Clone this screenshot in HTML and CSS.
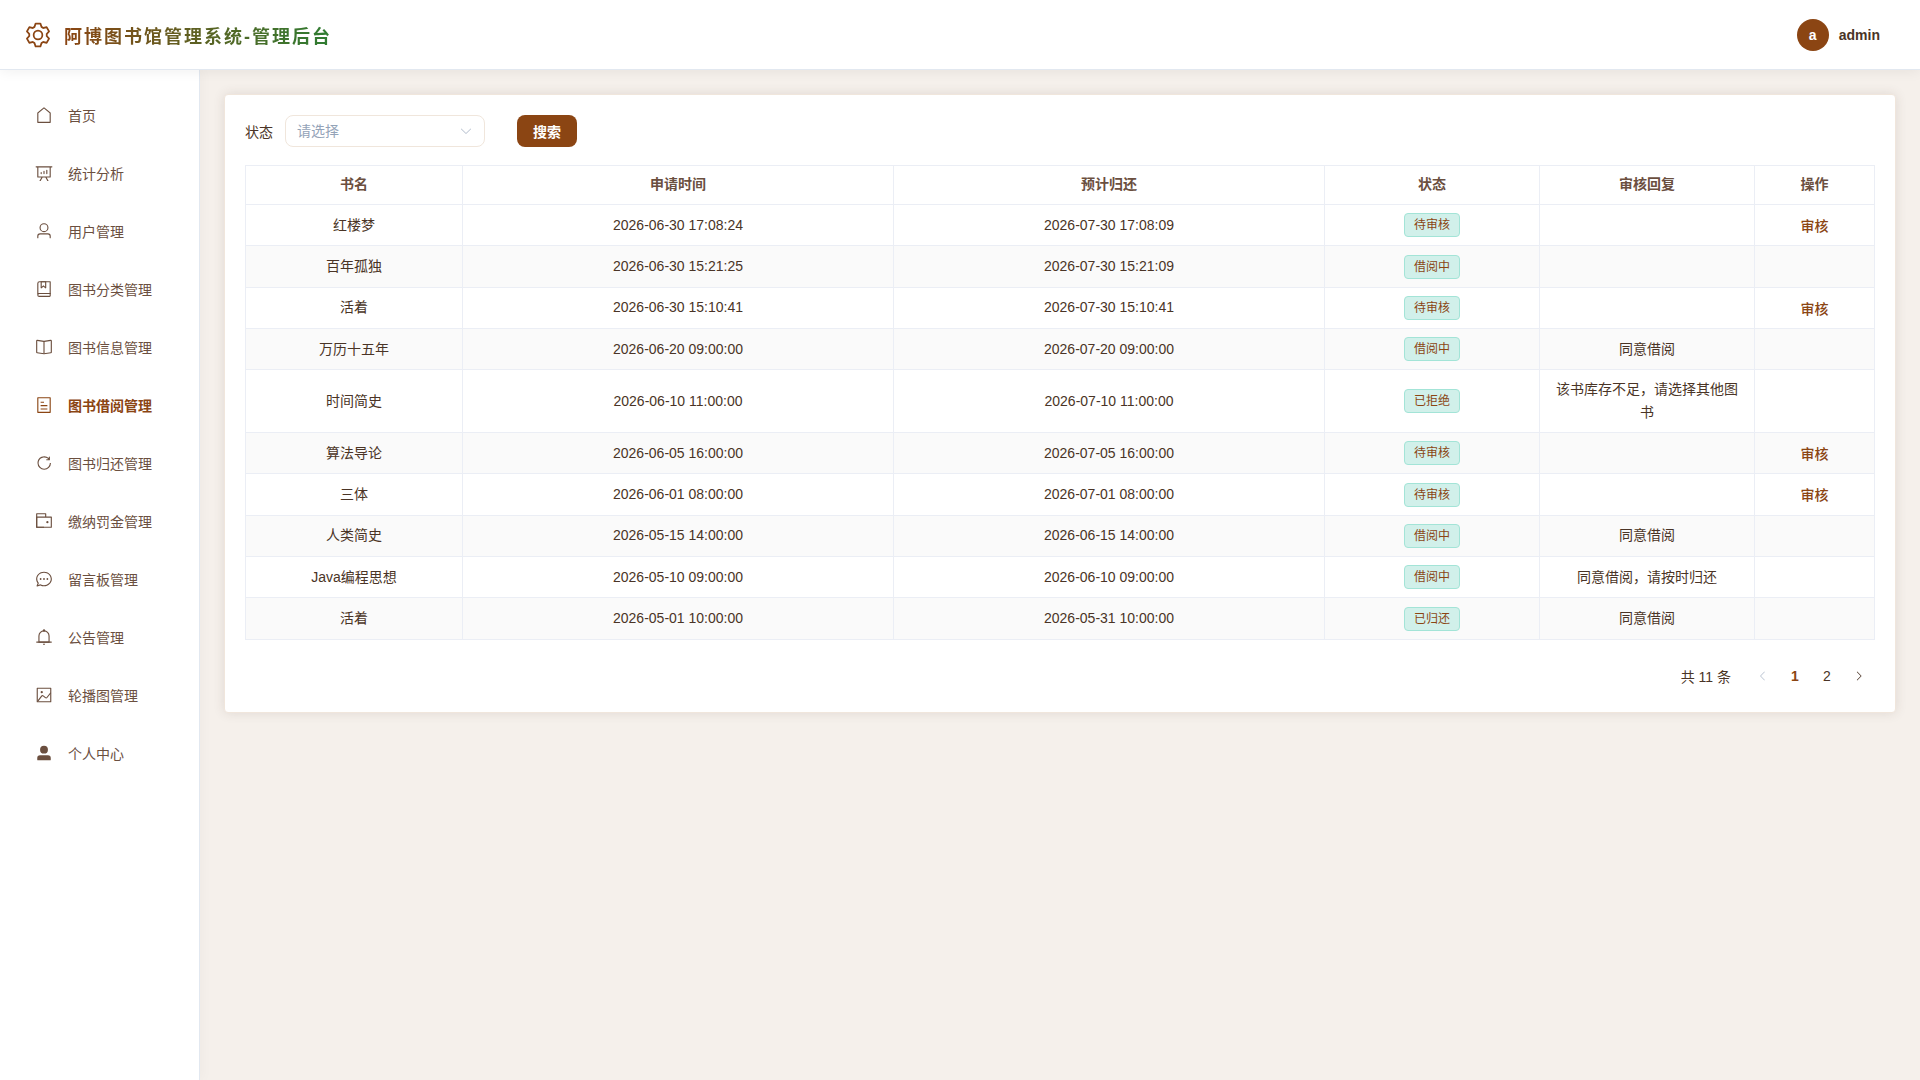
FILE: index.html
```
<!DOCTYPE html>
<html lang="zh-CN">
<head>
  <meta charset="UTF-8">
  <meta name="viewport" content="width=device-width, initial-scale=1.0">
  <title>阿博图书馆管理系统-管理后台</title>
  <link rel="stylesheet" href="styles.css">
</head>
<body>
  <header class="header">
    <div class="brand">
      <svg class="brand-icon" viewBox="0 0 1024 1024"><path d="M600.704 64a32 32 0 0 1 30.464 22.208l35.2 109.376c14.784 7.232 28.928 15.36 42.432 24.512l112.384-24.192a32 32 0 0 1 34.432 15.36L944.32 364.8a32 32 0 0 1-4.032 37.504l-77.12 85.12a357.12 357.12 0 0 1 0 49.024l77.12 85.248a32 32 0 0 1 4.032 37.504l-88.704 153.6a32 32 0 0 1-34.432 15.296L708.8 803.904c-13.44 9.088-27.648 17.28-42.368 24.512l-35.264 109.376A32 32 0 0 1 600.704 960H423.296a32 32 0 0 1-30.464-22.208L357.696 828.48a351.616 351.616 0 0 1-42.56-24.64l-112.32 24.256a32 32 0 0 1-34.432-15.36L79.68 659.2a32 32 0 0 1 4.032-37.504l77.12-85.248a357.12 357.12 0 0 1 0-48.896l-77.12-85.248A32 32 0 0 1 79.68 364.8l88.704-153.6a32 32 0 0 1 34.432-15.296l112.32 24.256c13.568-9.152 27.776-17.408 42.56-24.64l35.2-109.312A32 32 0 0 1 423.232 64H600.64zm-23.424 64H446.72l-36.352 113.088-24.512 11.968a294.113 294.113 0 0 0-34.816 20.096l-22.656 15.36-116.224-25.088-65.28 113.152 79.68 88.192-1.92 27.136a293.12 293.12 0 0 0 0 40.192l1.92 27.136-79.808 88.192 65.344 113.152 116.224-25.024 22.656 15.296a294.113 294.113 0 0 0 34.816 20.096l24.512 11.968L446.72 896h130.688l36.48-113.152 24.448-11.904a288.282 288.282 0 0 0 34.752-20.096l22.592-15.296 116.288 25.024 65.28-113.152-79.744-88.192 1.92-27.136a293.12 293.12 0 0 0 0-40.256l-1.92-27.136 79.808-88.128-65.344-113.152-116.288 24.96-22.592-15.232a287.616 287.616 0 0 0-34.752-20.096l-24.448-11.904L577.344 128zM512 320a192 192 0 1 1 0 384 192 192 0 0 1 0-384m0 64a128 128 0 1 0 0 256 128 128 0 0 0 0-256"/></svg>
      <h1 class="brand-title">阿博图书馆管理系统-管理后台</h1>
    </div>
    <div class="user">
      <span class="avatar">a</span>
      <span class="user-name">admin</span>
    </div>
  </header>

  <div class="layout">
    <nav class="sidebar">
      <a class="menu-item" href="#">
        <svg class="menu-icon" viewBox="0 0 1024 1024"><path d="M192 413.952V896h640V413.952L512 147.328zM139.52 374.4l352-293.312a32 32 0 0 1 40.96 0l352 293.312A32 32 0 0 1 896 398.976V928a32 32 0 0 1-32 32H160a32 32 0 0 1-32-32V398.976a32 32 0 0 1 11.52-24.576"/></svg>
        <span>首页</span>
      </a>
      <a class="menu-item" href="#">
        <svg class="menu-icon" viewBox="0 0 1024 1024"><path d="m665.216 768 110.848 192h-73.856L591.36 768H433.024L322.176 960H248.32l110.848-192H160a32 32 0 0 1-32-32V192H64a32 32 0 0 1 0-64h896a32 32 0 1 1 0 64h-64v544a32 32 0 0 1-32 32zM832 192H192v512h640zM352 448a32 32 0 0 1 32 32v64a32 32 0 0 1-64 0v-64a32 32 0 0 1 32-32m160-64a32 32 0 0 1 32 32v128a32 32 0 0 1-64 0V416a32 32 0 0 1 32-32m160-64a32 32 0 0 1 32 32v192a32 32 0 1 1-64 0V352a32 32 0 0 1 32-32"/></svg>
        <span>统计分析</span>
      </a>
      <a class="menu-item" href="#">
        <svg class="menu-icon" viewBox="0 0 1024 1024"><path d="M512 512a192 192 0 1 0 0-384 192 192 0 0 0 0 384m0 64a256 256 0 1 1 0-512 256 256 0 0 1 0 512m320 320v-96a96 96 0 0 0-96-96H288a96 96 0 0 0-96 96v96a32 32 0 1 1-64 0v-96a160 160 0 0 1 160-160h448a160 160 0 0 1 160 160v96a32 32 0 1 1-64 0"/></svg>
        <span>用户管理</span>
      </a>
      <a class="menu-item" href="#">
        <svg class="menu-icon" viewBox="0 0 1024 1024"><path d="M192 736h640V128H256a64 64 0 0 0-64 64zm64-672h608a32 32 0 0 1 32 32v672a32 32 0 0 1-32 32H160l-32 57.536V192A128 128 0 0 1 256 64"/><path d="M240 800a48 48 0 1 0 0 96h592v-96zm0-64h656v160a64 64 0 0 1-64 64H240a112 112 0 0 1 0-224m144-608v250.88l96-76.8 96 76.8V128zm-64-64h320v381.44a32 32 0 0 1-51.968 24.96L480 384l-108.032 86.4A32 32 0 0 1 320 445.44z"/></svg>
        <span>图书分类管理</span>
      </a>
      <a class="menu-item" href="#">
        <svg class="menu-icon" viewBox="0 0 1024 1024"><path d="m512 863.36 384-54.848v-638.72L525.568 222.72a96 96 0 0 1-27.136 0L128 169.792v638.72zM137.024 106.432l370.432 52.928a32 32 0 0 0 9.088 0l370.432-52.928A64 64 0 0 1 960 169.792v638.72a64 64 0 0 1-54.976 63.36l-388.48 55.488a32 32 0 0 1-9.088 0l-388.48-55.488A64 64 0 0 1 64 808.512v-638.72a64 64 0 0 1 73.024-63.36z"/><path d="M480 192h64v704h-64z"/></svg>
        <span>图书信息管理</span>
      </a>
      <a class="menu-item active" href="#">
        <svg class="menu-icon" viewBox="0 0 1024 1024"><path d="M192 128v768h640V128zm-32-64h704a32 32 0 0 1 32 32v832a32 32 0 0 1-32 32H160a32 32 0 0 1-32-32V96a32 32 0 0 1 32-32m160 448h384v64H320zm0-192h192v64H320zm0 384h384v64H320z"/></svg>
        <span>图书借阅管理</span>
      </a>
      <a class="menu-item" href="#">
        <svg class="menu-icon" viewBox="0 0 1024 1024"><path d="M784.512 230.272v-50.56a32 32 0 1 1 64 0v149.056a32 32 0 0 1-32 32H667.52a32 32 0 1 1 0-64h92.992A320 320 0 1 0 524.8 833.152a320 320 0 0 0 320-320h64a384 384 0 0 1-384 384 384 384 0 0 1-384-384 384 384 0 0 1 643.712-282.88"/></svg>
        <span>图书归还管理</span>
      </a>
      <a class="menu-item" href="#">
        <svg class="menu-icon" viewBox="0 0 1024 1024"><path d="M640 288h-64V128H128v704h384v32a32 32 0 0 0 32 32H96a32 32 0 0 1-32-32V96a32 32 0 0 1 32-32h512a32 32 0 0 1 32 32z"/><path d="M128 320v512h768V320zm-32-64h832a32 32 0 0 1 32 32v576a32 32 0 0 1-32 32H96a32 32 0 0 1-32-32V288a32 32 0 0 1 32-32"/><path d="M704 640a64 64 0 1 1 0-128 64 64 0 0 1 0 128"/></svg>
        <span>缴纳罚金管理</span>
      </a>
      <a class="menu-item" href="#">
        <svg class="menu-icon" viewBox="0 0 1024 1024"><path d="m174.72 855.68 135.296-45.12 23.68 11.84C388.096 849.536 448.576 864 512 864c211.84 0 384-166.784 384-352S723.84 160 512 160 128 326.784 128 512c0 69.12 24.96 139.264 70.848 199.232l22.08 28.8-46.272 115.584zm-45.248 82.56A32 32 0 0 1 89.6 896l58.368-145.92C94.72 680.32 64 596.864 64 512 64 299.904 256 96 512 96s448 203.904 448 416-192 416-448 416a461.056 461.056 0 0 1-206.912-48.384l-175.616 58.56z"/><path d="M512 563.2a51.2 51.2 0 1 1 0-102.4 51.2 51.2 0 0 1 0 102.4m192 0a51.2 51.2 0 1 1 0-102.4 51.2 51.2 0 0 1 0 102.4m-384 0a51.2 51.2 0 1 1 0-102.4 51.2 51.2 0 0 1 0 102.4"/></svg>
        <span>留言板管理</span>
      </a>
      <a class="menu-item" href="#">
        <svg class="menu-icon" viewBox="0 0 1024 1024"><path d="M512 64a64 64 0 0 1 64 64v64H448v-64a64 64 0 0 1 64-64"/><path d="M256 768h512V448a256 256 0 1 0-512 0zm256-640a320 320 0 0 1 320 320v384H192V448a320 320 0 0 1 320-320"/><path d="M96 768h832q32 0 32 32t-32 32H96q-32 0-32-32t32-32m352 128h128a64 64 0 0 1-128 0"/></svg>
        <span>公告管理</span>
      </a>
      <a class="menu-item" href="#">
        <svg class="menu-icon" viewBox="0 0 1024 1024"><path d="M160 160v704h704V160zm-32-64h768a32 32 0 0 1 32 32v768a32 32 0 0 1-32 32H128a32 32 0 0 1-32-32V128a32 32 0 0 1 32-32"/><path d="M384 288q64 0 64 64t-64 64q-64 0-64-64t64-64M185.408 876.992l-50.816-38.912L350.72 556.032a96 96 0 0 1 134.592-17.856l1.856 1.472 122.88 99.136a32 32 0 0 0 44.992-4.864l216-269.888 49.92 39.936-215.808 269.824-.256.32a96 96 0 0 1-135.04 14.464l-122.88-99.072-.64-.512a32 32 0 0 0-44.8 5.952z"/></svg>
        <span>轮播图管理</span>
      </a>
      <a class="menu-item" href="#">
        <svg class="menu-icon" viewBox="0 0 1024 1024"><path d="M288 320a224 224 0 1 0 448 0 224 224 0 1 0-448 0m544 608H160a32 32 0 0 1-32-32v-96a160 160 0 0 1 160-160h448a160 160 0 0 1 160 160v96a32 32 0 0 1-32 32z"/></svg>
        <span>个人中心</span>
      </a>
    </nav>

    <main class="main">
      <section class="card">
        <form class="search-form">
          <label class="search-label" for="status">状态</label>
          <div class="select-box">
            <select class="select" id="status">
              <option value="">请选择</option>
              <option>待审核</option>
              <option>借阅中</option>
              <option>已拒绝</option>
              <option>已归还</option>
            </select>
            <svg class="select-arrow" viewBox="0 0 1024 1024"><path d="M831.872 340.864 512 652.672 192.128 340.864a30.592 30.592 0 0 0-42.752 0 29.12 29.12 0 0 0 0 41.6L489.664 714.24a32 32 0 0 0 44.672 0l340.288-331.712a29.12 29.12 0 0 0 0-41.728 30.592 30.592 0 0 0-42.752 0z"/></svg>
          </div>
          <button class="search-btn" type="button">搜索</button>
        </form>

        <table class="table">
          <colgroup>
            <col class="col-name">
            <col class="col-time">
            <col class="col-time">
            <col class="col-status">
            <col class="col-reply">
            <col class="col-action">
          </colgroup>
          <thead>
            <tr>
              <th>书名</th>
              <th>申请时间</th>
              <th>预计归还</th>
              <th>状态</th>
              <th>审核回复</th>
              <th>操作</th>
            </tr>
          </thead>
          <tbody>
            <tr>
              <td>红楼梦</td>
              <td>2026-06-30 17:08:24</td>
              <td>2026-07-30 17:08:09</td>
              <td><span class="tag">待审核</span></td>
              <td></td>
              <td><button class="link-btn" type="button">审核</button></td>
            </tr>
            <tr>
              <td>百年孤独</td>
              <td>2026-06-30 15:21:25</td>
              <td>2026-07-30 15:21:09</td>
              <td><span class="tag">借阅中</span></td>
              <td></td>
              <td></td>
            </tr>
            <tr>
              <td>活着</td>
              <td>2026-06-30 15:10:41</td>
              <td>2026-07-30 15:10:41</td>
              <td><span class="tag">待审核</span></td>
              <td></td>
              <td><button class="link-btn" type="button">审核</button></td>
            </tr>
            <tr>
              <td>万历十五年</td>
              <td>2026-06-20 09:00:00</td>
              <td>2026-07-20 09:00:00</td>
              <td><span class="tag">借阅中</span></td>
              <td>同意借阅</td>
              <td></td>
            </tr>
            <tr>
              <td>时间简史</td>
              <td>2026-06-10 11:00:00</td>
              <td>2026-07-10 11:00:00</td>
              <td><span class="tag">已拒绝</span></td>
              <td>该书库存不足，请选择其他图书</td>
              <td></td>
            </tr>
            <tr>
              <td>算法导论</td>
              <td>2026-06-05 16:00:00</td>
              <td>2026-07-05 16:00:00</td>
              <td><span class="tag">待审核</span></td>
              <td></td>
              <td><button class="link-btn" type="button">审核</button></td>
            </tr>
            <tr>
              <td>三体</td>
              <td>2026-06-01 08:00:00</td>
              <td>2026-07-01 08:00:00</td>
              <td><span class="tag">待审核</span></td>
              <td></td>
              <td><button class="link-btn" type="button">审核</button></td>
            </tr>
            <tr>
              <td>人类简史</td>
              <td>2026-05-15 14:00:00</td>
              <td>2026-06-15 14:00:00</td>
              <td><span class="tag">借阅中</span></td>
              <td>同意借阅</td>
              <td></td>
            </tr>
            <tr>
              <td>Java编程思想</td>
              <td>2026-05-10 09:00:00</td>
              <td>2026-06-10 09:00:00</td>
              <td><span class="tag">借阅中</span></td>
              <td>同意借阅，请按时归还</td>
              <td></td>
            </tr>
            <tr>
              <td>活着</td>
              <td>2026-05-01 10:00:00</td>
              <td>2026-05-31 10:00:00</td>
              <td><span class="tag">已归还</span></td>
              <td>同意借阅</td>
              <td></td>
            </tr>
          </tbody>
        </table>

        <div class="pagination">
          <span class="total">共 11 条</span>
          <button class="page-btn" type="button" aria-label="上一页" disabled>
            <svg class="page-icon" viewBox="0 0 1024 1024"><path d="M609.408 149.376 277.76 489.6a32 32 0 0 0 0 44.672l331.648 340.352a29.12 29.12 0 0 0 41.728 0 30.592 30.592 0 0 0 0-42.752L339.264 511.936l311.872-319.872a30.592 30.592 0 0 0 0-42.688 29.12 29.12 0 0 0-41.728 0"/></svg>
          </button>
          <button class="page-btn current" type="button">1</button>
          <button class="page-btn" type="button">2</button>
          <button class="page-btn" type="button" aria-label="下一页">
            <svg class="page-icon" viewBox="0 0 1024 1024"><path d="M340.864 149.312a30.592 30.592 0 0 0 0 42.752L652.736 512 340.864 831.872a30.592 30.592 0 0 0 0 42.752 29.12 29.12 0 0 0 41.728 0L714.24 534.336a32 32 0 0 0 0-44.672L382.592 149.376a29.12 29.12 0 0 0-41.728 0z"/></svg>
          </button>
        </div>
      </section>
    </main>
  </div>
</body>
</html>
```
FILE: styles.css
```
* {
  box-sizing: border-box;
}

body {
  margin: 0;
  min-height: 100vh;
  display: flex;
  flex-direction: column;
  font-family: "Liberation Sans", "Noto Sans CJK SC", sans-serif;
  font-size: 14px;
  color: #4a3426;
  background: #f5f0eb;
}

button,
select {
  font-family: inherit;
  font-size: 14px;
}

svg {
  fill: currentColor;
}

/* header */
.header {
  position: relative;
  z-index: 1;
  display: flex;
  align-items: center;
  justify-content: space-between;
  height: 70px;
  padding: 0 40px 0 24px;
  background: #fff;
  border-bottom: 1px solid #e2e8f0;
  box-shadow: 0 2px 12px rgba(0, 0, 0, 0.06);
}

.brand {
  display: flex;
  align-items: center;
  gap: 12px;
}

.brand-icon {
  width: 28px;
  height: 28px;
  color: #8b4513;
}

.brand-title {
  margin: 0;
  font-size: 18px;
  letter-spacing: 2px;
  background: linear-gradient(90deg, #8b4513, #2e7d32);
  background-clip: text;
  -webkit-background-clip: text;
  color: transparent;
}

.user {
  display: flex;
  align-items: center;
  gap: 10px;
  font-weight: 700;
}

.avatar {
  display: flex;
  align-items: center;
  justify-content: center;
  width: 32px;
  height: 32px;
  border-radius: 50%;
  background: #8b4513;
  color: #fff;
}

/* layout */
.layout {
  flex: 1;
  display: flex;
}

.sidebar {
  display: flex;
  flex-direction: column;
  gap: 8px;
  flex: 0 0 200px;
  padding: 20px 0;
  background: #fff;
  border-right: 1px solid #e2e8f0;
  box-shadow: 2px 0 12px rgba(0, 0, 0, 0.03);
}

.menu-item {
  display: flex;
  align-items: center;
  gap: 15px;
  height: 50px;
  padding-left: 35px;
  color: #6b4f3f;
  text-decoration: none;
}

.menu-item.active {
  color: #8b4513;
  font-weight: 700;
}

.menu-icon {
  width: 18px;
  height: 18px;
}

.main {
  flex: 1;
  padding: 24px 25px 24px 24px;
}

.card {
  padding: 20px;
  background: #fff;
  border: 1px solid #f0e6dc;
  border-radius: 4px;
  box-shadow: 0 0 12px rgba(74, 52, 38, 0.12);
}

/* search */
.search-form {
  display: flex;
  align-items: center;
  margin-bottom: 18px;
}

.search-label {
  margin-right: 12px;
}

.select-box {
  position: relative;
  width: 200px;
  margin-right: 32px;
}

.select {
  display: block;
  width: 100%;
  height: 32px;
  padding: 0 32px 0 11px;
  border: 1px solid #f0e6dc;
  border-radius: 8px;
  background: #fff;
  color: #94a3b8;
  appearance: none;
}

.select-arrow {
  position: absolute;
  top: 9px;
  right: 12px;
  width: 14px;
  height: 14px;
  color: #b6c0cf;
  pointer-events: none;
}

.search-btn {
  width: 60px;
  height: 32px;
  padding: 0;
  border: none;
  border-radius: 8px;
  background: #8b4513;
  color: #fff;
  font-weight: 700;
  cursor: pointer;
}

/* table */
.table {
  width: 100%;
  table-layout: fixed;
  border-collapse: collapse;
  border: 1px solid #ebeef5;
  line-height: 23px;
  text-align: center;
}

.col-name {
  width: 217px;
}

.col-time {
  width: 431px;
}

.col-status,
.col-reply {
  width: 215px;
}

.col-action {
  width: 120px;
}

.table th,
.table td {
  padding: 8px 12px;
  border: 1px solid #ebeef5;
}

.table th {
  padding-top: 7px;
  color: #6b4f3f;
  font-weight: 700;
}

.table tbody tr:nth-child(even) {
  background: #fafafa;
}

.tag {
  display: inline-flex;
  align-items: center;
  height: 24px;
  padding: 0 9px;
  border: 1px solid #a3e4d7;
  border-radius: 4px;
  background: #d1f0ea;
  color: #8b4513;
  font-size: 12px;
  line-height: 12px;
  vertical-align: middle;
}

.link-btn {
  padding: 0;
  border: none;
  background: none;
  color: #8b4513;
  font-weight: 500;
  line-height: 14px;
  vertical-align: middle;
  cursor: pointer;
}

/* pagination */
.pagination {
  display: flex;
  align-items: center;
  justify-content: flex-end;
  margin-top: 20px;
}

.total {
  margin-right: 16px;
}

.page-btn {
  display: flex;
  align-items: center;
  justify-content: center;
  width: 32px;
  height: 32px;
  padding: 0;
  border: none;
  background: none;
  color: #4a3426;
  cursor: pointer;
}

.page-btn:disabled {
  color: #b6c0cf;
}

.page-btn.current {
  color: #8b4513;
  font-weight: 700;
}

.page-icon {
  width: 12px;
  height: 12px;
}
```
